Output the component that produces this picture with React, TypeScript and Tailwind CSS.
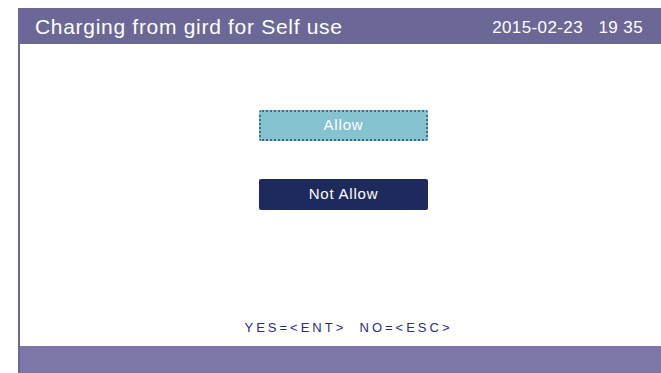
export default function App() {
  return (
    <div
      className="w-[661px] h-[373px] bg-white pt-[8px] pl-[18px] overflow-hidden"
      style={{ fontFamily: '"Liberation Sans", Arial, sans-serif' }}
    >
      <div className="h-full flex flex-col border-l-2 border-[#6b6897]">
        {/* header */}
        <div className="h-[36px] bg-[#6b6897] flex items-center justify-between pl-[15px] pr-[18px] text-white">
          <span className="text-[21px] leading-none tracking-[0.7px]">Charging from gird for Self use</span>
          <span className="text-[17px] leading-none tracking-[0.4px] whitespace-pre pt-[3px]">2015-02-23   19 35</span>
        </div>

        <div className="flex-1 flex flex-col items-center pl-[6px]">
          <div className="mt-[66px] w-[169px] h-[31px] rounded-[2px] bg-[#86c3d0] border-2 border-dotted border-[#3f6f86] flex items-center justify-center text-white text-[15px] tracking-[0.8px]">
            Allow
          </div>
          <div className="mt-[38px] w-[169px] h-[31px] rounded-[2px] bg-[#1f2a5c] flex items-center justify-center text-white text-[15px] tracking-[0.8px]">
            Not Allow
          </div>
          <div className="mt-auto mb-[12px] pl-[10px] text-[13px] leading-none tracking-[3px] text-[#2b2a8c] whitespace-pre">
            YES=&lt;ENT&gt;  NO=&lt;ESC&gt;
          </div>
        </div>

        <div className="h-[27px] bg-[#7b78a8]" />
      </div>
    </div>
  );
}
